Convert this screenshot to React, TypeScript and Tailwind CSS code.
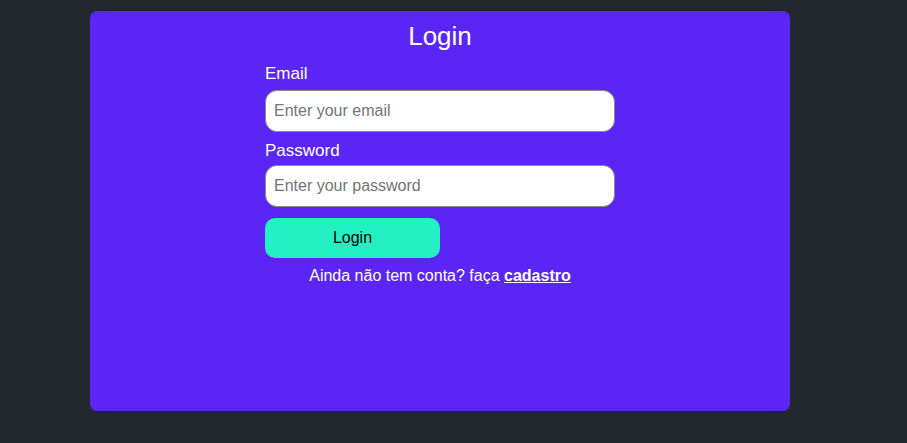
export default function App() {
  return (
    <div className="min-h-screen w-full bg-[#22262d] flex pl-[90px] pt-[11px] font-['Liberation_Sans',Arial,sans-serif]">
      <div className="w-[700px] h-[400px] bg-[#5b26f5] rounded-[7px] flex flex-col items-center pt-[10px]">
        <h1 className="text-[26px] leading-[30px] text-white">Login</h1>
        <form className="w-[350px] flex flex-col mt-[13px]" onSubmit={(e) => e.preventDefault()}>
          <label className="text-[17px] leading-[20px] text-white">Email</label>
          <input
            type="email"
            placeholder="Enter your email"
            className="mt-[6px] h-[42px] w-full rounded-[12px] border border-[#8a8a8a] bg-white px-[8px] text-[16px] text-black placeholder:text-[#757575] outline-none"
          />
          <label className="mt-[9px] text-[17px] leading-[20px] text-white">Password</label>
          <input
            type="password"
            placeholder="Enter your password"
            className="mt-[4px] h-[42px] w-full rounded-[12px] border border-[#8a8a8a] bg-white px-[8px] text-[16px] text-black placeholder:text-[#757575] outline-none"
          />
          <button
            type="submit"
            className="mt-[11px] h-[40px] w-[175px] rounded-[10px] bg-[#23f0c3] text-[16px] text-black"
          >
            Login
          </button>
          <p className="mt-[8px] text-center text-[16px] leading-[20px] text-white">
            Ainda não tem conta? faça{' '}
            <a href="#" className="font-bold underline">cadastro</a>
          </p>
        </form>
      </div>
    </div>
  );
}
